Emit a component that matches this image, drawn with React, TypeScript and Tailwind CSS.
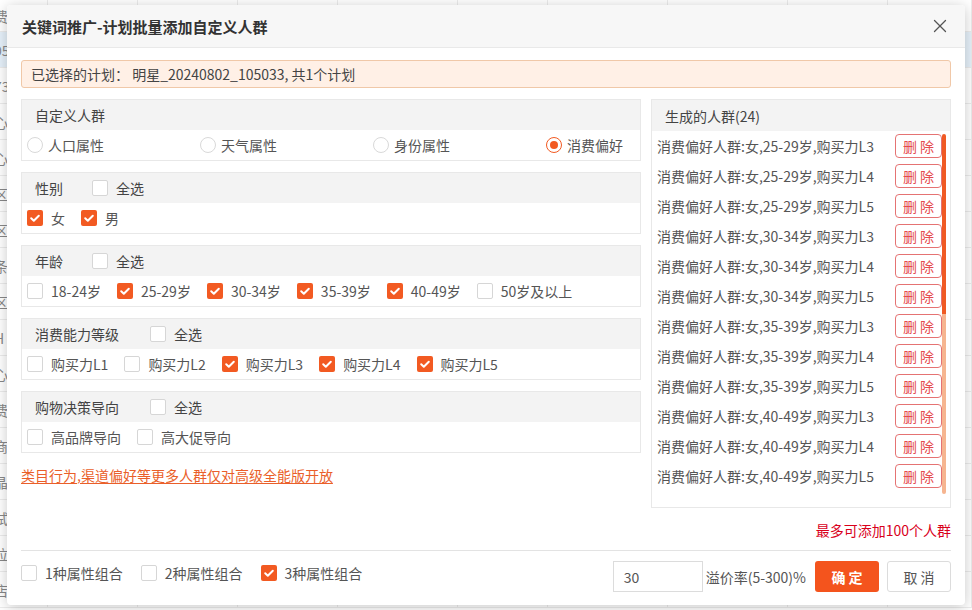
import React from "react";
import { X } from "lucide-react";

type Opt = { label: string; checked?: boolean };

function Checkbox({ checked, label, className }: { checked?: boolean; label: string; className?: string }) {
  return (
    <label className={"flex items-center gap-2 whitespace-nowrap " + (className ?? "")}>
      {checked ? (
        <span className="flex h-4 w-4 shrink-0 items-center justify-center rounded-[2px] bg-[#f25a22]">
          <svg viewBox="0 0 16 16" className="h-4 w-4">
            <path d="M4.2 8.3l2.6 2.5 5-5" fill="none" stroke="#fff" strokeWidth="2" strokeLinecap="round" strokeLinejoin="round" />
          </svg>
        </span>
      ) : (
        <span className="h-4 w-4 shrink-0 rounded-[2px] border border-[#d6d6d6] bg-white" />
      )}
      <span>{label}</span>
    </label>
  );
}

function Radio({ checked, label }: { checked?: boolean; label: string }) {
  return (
    <label className="flex items-center gap-[5px] whitespace-nowrap">
      {checked ? (
        <span className="flex h-4 w-4 items-center justify-center rounded-full border border-[#f25a22] bg-white">
          <span className="h-2 w-2 rounded-full bg-[#f25a22]" />
        </span>
      ) : (
        <span className="h-4 w-4 rounded-full border border-[#d9d9d9] bg-white" />
      )}
      <span>{label}</span>
    </label>
  );
}

function Section({ title, labelGap, items }: { title: string; labelGap?: boolean; items: Opt[] }) {
  return (
    <div className="border border-[#e8e8e8] bg-white">
      <div className="flex h-[30px] items-center bg-[#f3f3f3] pl-[13px] text-[#444]">
        <span className={labelGap ? "mr-[31px]" : "mr-[29px]"}>{title}</span>
        <Checkbox label="全选" />
      </div>
      <div className="flex h-[30px] items-center pl-[5px]">
        {items.map((o) => (
          <Checkbox key={o.label} label={o.label} checked={o.checked} className="mr-[16px]" />
        ))}
      </div>
    </div>
  );
}

const ages = ["25-29岁", "30-34岁", "35-39岁", "40-49岁"];
const levels = ["L3", "L4", "L5"];
const crowds: string[] = [];
["女", "男"].forEach((g) =>
  ages.forEach((a) => levels.forEach((l) => crowds.push(`消费偏好人群:${g},${a},购买力${l}`)))
);

const bgChars = ["费", "05", "73", "心", "心", "区", "区", "条", "区", "H", "心", "费", "商", "晶", "试", "拉", "店"];
const colWidths = ["w-[48px]", "w-[90px]", "w-[100px]", "w-[100px]", "w-[120px]", "w-[90px]", "w-[120px]", "w-[120px]", "w-[100px]", "w-[84px]"];

export default function App() {
  return (
    <div className="relative h-[610px] w-[972px] overflow-hidden bg-white font-['Noto_Sans_CJK_SC','Noto_Sans',sans-serif] text-[14px] leading-[20px] text-[#555]">
      {/* table behind the dialog */}
      <div className="flex flex-col">
        {bgChars.map((c, i) => (
          <div
            key={i}
            className={
              "flex border-b border-[#ececec] " +
              (i === 0 ? "h-[32px] " : "h-[36px] ") +
              (i === 1 ? "bg-[#e6f1fa]" : "")
            }
          >
            {colWidths.map((w, j) => (
              <div key={j} className={w + " flex items-center overflow-hidden border-r border-[#ececec] text-[#888]"}>
                {j === 0 && <span className="-ml-[6px]">{c}</span>}
              </div>
            ))}
          </div>
        ))}
      </div>

      {/* dialog */}
      <div className="absolute left-[7px] top-[5px] flex h-[600px] w-[958px] flex-col rounded-[4px] bg-white shadow-[0_2px_14px_rgba(0,0,0,0.22)]">
        <div className="flex h-[43px] shrink-0 items-center justify-between rounded-t-[4px] border-b border-[#e9e9e9] bg-[#f7f7f7] pl-[15px] pr-[14px]">
          <span className="mt-[2px] text-[15px] font-bold text-[#333]">关键词推广-计划批量添加自定义人群</span>
          <X size={22} strokeWidth={1.4} className="text-[#555]" />
        </div>

        <div className="flex flex-1 flex-col px-[14px]">
          <div className="mt-[12px] flex h-[28px] items-center rounded-[3px] border border-[#f0c8a8] bg-[#fff0e6] pl-[9px] text-[#444]">
            已选择的计划： 明星_20240802_105033, 共1个计划
          </div>

          <div className="mt-[11px] flex gap-[10px]">
            <div className="flex w-[620px] flex-col">
              <div className="flex flex-col gap-[11px]">
                <div className="border border-[#e8e8e8] bg-white">
                  <div className="flex h-[30px] items-center bg-[#f3f3f3] pl-[13px] text-[#444]">自定义人群</div>
                  <div className="flex h-[30px] items-center justify-between pl-[5px] pr-[17px]">
                    <Radio label="人口属性" />
                    <Radio label="天气属性" />
                    <Radio label="身份属性" />
                    <Radio label="消费偏好" checked />
                  </div>
                </div>
                <Section title="性别" items={[{ label: "女", checked: true }, { label: "男", checked: true }]} />
                <Section
                  title="年龄"
                  items={[
                    { label: "18-24岁" },
                    { label: "25-29岁", checked: true },
                    { label: "30-34岁", checked: true },
                    { label: "35-39岁", checked: true },
                    { label: "40-49岁", checked: true },
                    { label: "50岁及以上" },
                  ]}
                />
                <Section
                  title="消费能力等级"
                  labelGap
                  items={[
                    { label: "购买力L1" },
                    { label: "购买力L2" },
                    { label: "购买力L3", checked: true },
                    { label: "购买力L4", checked: true },
                    { label: "购买力L5", checked: true },
                  ]}
                />
                <Section title="购物决策导向" labelGap items={[{ label: "高品牌导向" }, { label: "高大促导向" }]} />
              </div>
              <a className="mt-[12px] text-[#ea5f2a] underline underline-offset-2">类目行为,渠道偏好等更多人群仅对高级全能版开放</a>
            </div>

            <div className="flex w-[300px] flex-col">
              <div className="flex h-[409px] flex-col border border-[#e8e8e8]">
                <div className="flex h-[31px] shrink-0 items-center bg-[#f3f3f3] pl-[13px] text-[#444]">生成的人群(24)</div>
                <div className="flex pr-[4px]">
                  <div className="h-[360px] flex-1 overflow-hidden pl-[5px]">
                    {crowds.map((c) => (
                      <div key={c} className="flex h-[30px] items-center justify-between">
                        <span className="whitespace-nowrap">{c}</span>
                        <button className="flex h-[24px] w-[47px] items-center justify-center rounded-[4px] border border-[#e57373] bg-white text-[#e5484d]">
                          删 除
                        </button>
                      </div>
                    ))}
                  </div>
                  <div className="mt-[3px] flex h-[360px] w-[4px] flex-col">
                    <div className="h-[180px] rounded-t-[2px] bg-[#f05a24]" />
                    <div className="h-[180px] rounded-b-[2px] bg-[#f6b590]" />
                  </div>
                </div>
              </div>
              <div className="mt-[12px] text-right text-[#d9001b]">最多可添加100个人群</div>
            </div>
          </div>

          <div className="mt-[10px] border-t border-[#e3e3e3]" />

          <div className="flex items-center justify-between pt-[10px]">
            <div className="mb-[7px] flex items-center">
              <Checkbox label="1种属性组合" className="mr-[18px]" />
              <Checkbox label="2种属性组合" className="mr-[18px]" />
              <Checkbox label="3种属性组合" checked />
            </div>
            <div className="flex items-center">
              <div className="flex h-[31px] w-[90px] items-center border border-[#dcdcdc] pl-[10px] text-[#555]">30</div>
              <span className="ml-[3px]">溢价率(5-300)%</span>
              <button className="ml-[9px] flex h-[31px] w-[64px] items-center justify-center rounded-[3px] bg-[#f4541d] font-bold text-white">
                确 定
              </button>
              <button className="ml-[8px] flex h-[31px] w-[64px] items-center justify-center rounded-[3px] border border-[#dcdcdc] bg-white text-[#555]">
                取 消
              </button>
            </div>
          </div>
        </div>
      </div>
    </div>
  );
}
